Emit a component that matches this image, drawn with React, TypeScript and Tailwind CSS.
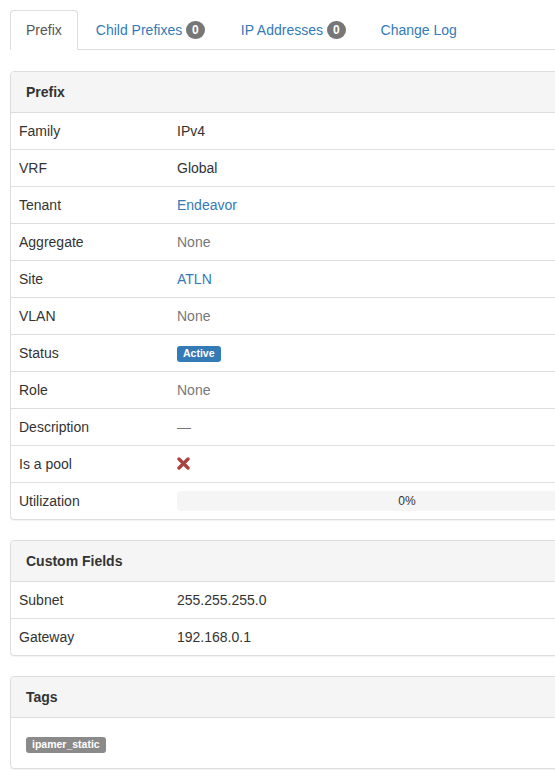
import React from "react";

const font = { fontFamily: '"Liberation Sans", Arial, sans-serif' };

type Row = { label: string; value: React.ReactNode };

const muted = (t: string) => <span className="text-[#777]">{t}</span>;
const link = (t: string) => <span className="text-[#337ab7]">{t}</span>;

const prefixRows: Row[] = [
  { label: "Family", value: "IPv4" },
  { label: "VRF", value: "Global" },
  { label: "Tenant", value: link("Endeavor") },
  { label: "Aggregate", value: muted("None") },
  { label: "Site", value: link("ATLN") },
  { label: "VLAN", value: muted("None") },
  {
    label: "Status",
    value: (
      <span className="inline-block rounded-[3px] bg-[#337ab7] px-[6px] pt-[2px] pb-[3px] align-[1px] text-[10.5px] font-bold leading-none text-white">
        Active
      </span>
    ),
  },
  { label: "Role", value: muted("None") },
  { label: "Description", value: muted("—") },
  {
    label: "Is a pool",
    value: (
      <svg width="13" height="13" viewBox="0 0 13 13" className="inline-block align-[-1px]">
        <path d="M2 2 L11 11 M11 2 L2 11" stroke="#a94442" strokeWidth="3.4" strokeLinecap="round" />
      </svg>
    ),
  },
  {
    label: "Utilization",
    value: (
      <div className="flex h-5 w-full items-center justify-center rounded bg-[#f5f5f5] text-xs text-[#333]">
        0%
      </div>
    ),
  },
];

const customRows: Row[] = [
  { label: "Subnet", value: "255.255.255.0" },
  { label: "Gateway", value: "192.168.0.1" },
];

function Panel({ title, children }: { title: string; children: React.ReactNode }) {
  return (
    <div className="mb-5 w-[636px] rounded border border-[#ddd] bg-white shadow-[0_1px_1px_rgba(0,0,0,0.05)]">
      <div className="rounded-t border-b border-[#ddd] bg-[#f5f5f5] px-[15px] py-[10px] font-bold text-[#333]">
        {title}
      </div>
      {children}
    </div>
  );
}

function Table({ rows }: { rows: Row[] }) {
  return (
    <div>
      {rows.map((r, i) => (
        <div key={r.label} className={`flex ${i > 0 ? "border-t border-[#ddd]" : ""}`}>
          <div className="w-[158px] shrink-0 p-2">{r.label}</div>
          <div className="flex-1 p-2">{r.value}</div>
        </div>
      ))}
    </div>
  );
}

function Badge({ n }: { n: number }) {
  return (
    <span className="inline-block min-w-[10px] rounded-[10px] bg-[#777] px-[6px] py-[3px] align-[1px] text-xs font-bold leading-none text-white">
      {n}
    </span>
  );
}

export default function App() {
  return (
    <div className="min-h-[783px] w-[555px] overflow-hidden bg-white text-sm leading-5 text-[#333]" style={font}>
      <div className="w-[700px] pl-[10px] pt-[10px]">
        <ul className="mb-[21px] flex border-b border-[#ddd]">
          <li className="-mb-px mr-[2px] rounded-t border border-[#ddd] border-b-transparent bg-white px-[15px] py-[9px] text-[#555]">
            Prefix
          </li>
          <li className="mb-[-1px] mr-[2px] border border-transparent py-[9px] pl-[15px] pr-[17px] text-[#337ab7]">
            Child Prefixes <Badge n={0} />
          </li>
          <li className="mb-[-1px] mr-[2px] border border-transparent py-[9px] pl-[15px] pr-[16px] text-[#337ab7]">
            IP Addresses <Badge n={0} />
          </li>
          <li className="mb-[-1px] mr-[2px] border border-transparent px-[15px] py-[9px] text-[#337ab7]">Change Log</li>
        </ul>

        <Panel title="Prefix">
          <Table rows={prefixRows} />
        </Panel>

        <Panel title="Custom Fields">
          <Table rows={customRows} />
        </Panel>

        <Panel title="Tags">
          <div className="p-[15px]">
            <span className="inline-block rounded-[3px] bg-[#8a8a8a] px-[6px] pt-[2px] pb-[3px] text-[10.5px] font-bold leading-none text-white">
              ipamer_static
            </span>
          </div>
        </Panel>
      </div>
    </div>
  );
}
